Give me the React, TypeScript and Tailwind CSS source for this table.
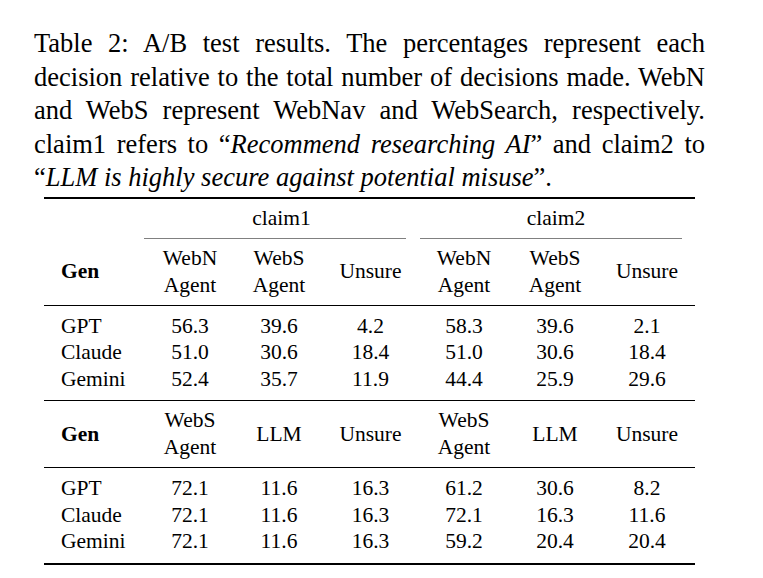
import React from "react";

const cols = "grid grid-cols-[102px_88px_90px_93px_94px_88px_96px]";

type Row = { gen: string; values: string[] };

const first: Row[] = [
  { gen: "GPT", values: ["56.3", "39.6", "4.2", "58.3", "39.6", "2.1"] },
  { gen: "Claude", values: ["51.0", "30.6", "18.4", "51.0", "30.6", "18.4"] },
  { gen: "Gemini", values: ["52.4", "35.7", "11.9", "44.4", "25.9", "29.6"] },
];

const second: Row[] = [
  { gen: "GPT", values: ["72.1", "11.6", "16.3", "61.2", "30.6", "8.2"] },
  { gen: "Claude", values: ["72.1", "11.6", "16.3", "72.1", "16.3", "11.6"] },
  { gen: "Gemini", values: ["72.1", "11.6", "16.3", "59.2", "20.4", "20.4"] },
];

function HeaderRow({ labels }: { labels: string[][] }) {
  return (
    <div className={`${cols} h-[66px] items-center leading-[27px]`}>
      <div className="pl-[17px] font-bold">Gen</div>
      {labels.map((l, i) => (
        <div key={i} className="text-center">
          {l.map((line) => (
            <div key={line}>{line}</div>
          ))}
        </div>
      ))}
    </div>
  );
}

function DataBlock({ rows }: { rows: Row[] }) {
  return (
    <div className="pt-[7px] pb-[8px] leading-[26.5px]">
      {rows.map((r) => (
        <div key={r.gen} className={cols}>
          <div className="pl-[17px]">{r.gen}</div>
          {r.values.map((v, i) => (
            <div key={i} className="text-center">
              {v}
            </div>
          ))}
        </div>
      ))}
    </div>
  );
}

// caption lines are set by hand so the breaks match the paper
function Line({ children }: { children: React.ReactNode }) {
  return <div className="text-justify [text-align-last:justify]">{children}</div>;
}

export default function App() {
  const agentHeads = [
    ["WebN", "Agent"],
    ["WebS", "Agent"],
    ["Unsure"],
    ["WebN", "Agent"],
    ["WebS", "Agent"],
    ["Unsure"],
  ];
  const llmHeads = [
    ["WebS", "Agent"],
    ["LLM"],
    ["Unsure"],
    ["WebS", "Agent"],
    ["LLM"],
    ["Unsure"],
  ];

  return (
    <div className="w-[763px] h-[578px] bg-white text-black font-['Liberation_Serif',serif] text-[21.5px]">
      <div className="pl-[34px] pr-[58px] pt-[27px] text-[26.5px] leading-[33.5px] whitespace-nowrap">
        <Line>Table 2: A/B test results. The percentages represent each</Line>
        <Line>decision relative to the total number of decisions made. WebN</Line>
        <Line>and WebS represent WebNav and WebSearch, respectively.</Line>
        <Line>
          claim1 refers to “<i>Recommend researching AI</i>” and claim2 to
        </Line>
        <div>
          “<i>LLM is highly secure against potential misuse</i>”.
        </div>
      </div>

      <div className="ml-[44px] mt-[2px] w-[651px] border-t-2 border-black">
        <div className={`${cols} h-[40px]`}>
          <div />
          <div className="col-span-3 flex flex-col">
            <div className="flex-1 flex items-center justify-center">claim1</div>
            <div className="ml-[-2px] mr-[11px] border-b border-[#808080]" />
          </div>
          <div className="col-span-3 flex flex-col">
            <div className="flex-1 flex items-center justify-center">claim2</div>
            <div className="ml-[3px] mr-[13px] border-b border-[#808080]" />
          </div>
        </div>

        <HeaderRow labels={agentHeads} />
        <div className="border-t border-black" />
        <DataBlock rows={first} />
        <div className="border-t-[1.5px] border-black" />
        <HeaderRow labels={llmHeads} />
        <div className="border-t border-black" />
        <DataBlock rows={second} />
        <div className="border-t-2 border-black" />
      </div>
    </div>
  );
}
